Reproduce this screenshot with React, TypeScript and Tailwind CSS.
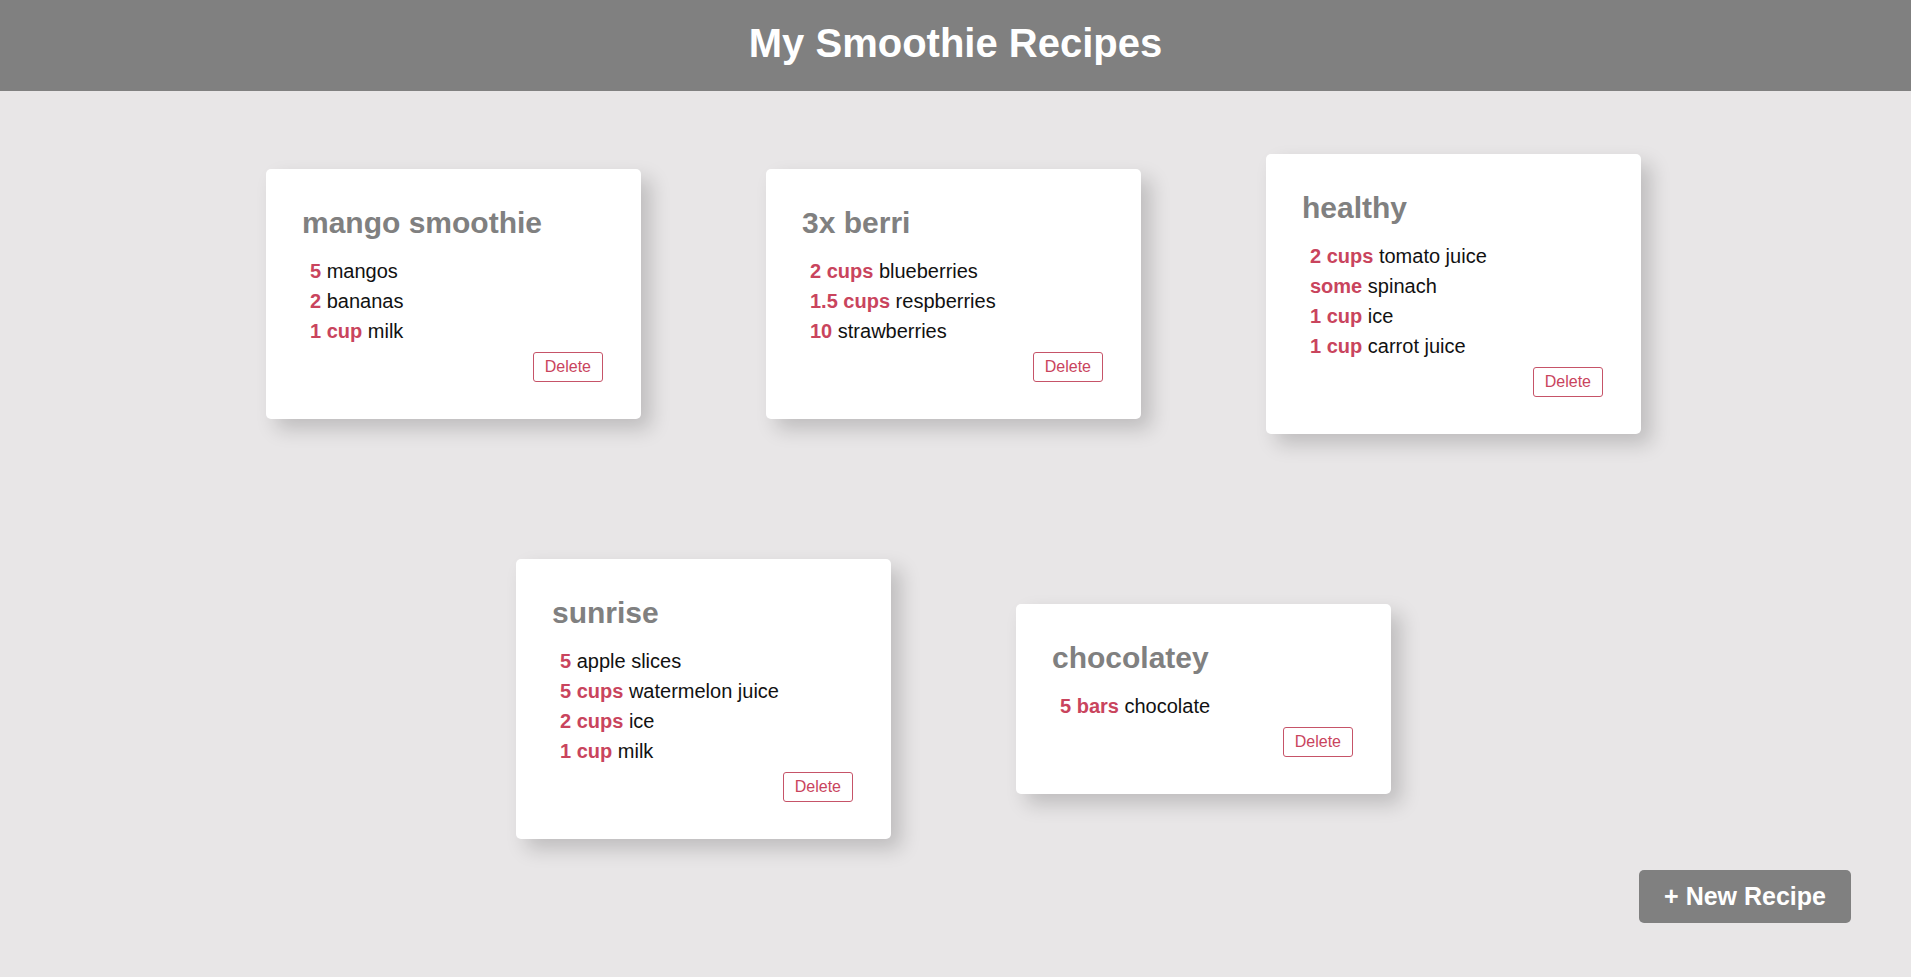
const recipes = [
  {
    name: "mango smoothie",
    ingredients: [
      { amount: "5", item: "mangos" },
      { amount: "2", item: "bananas" },
      { amount: "1 cup", item: "milk" },
    ],
  },
  {
    name: "3x berri",
    ingredients: [
      { amount: "2 cups", item: "blueberries" },
      { amount: "1.5 cups", item: "respberries" },
      { amount: "10", item: "strawberries" },
    ],
  },
  {
    name: "healthy",
    ingredients: [
      { amount: "2 cups", item: "tomato juice" },
      { amount: "some", item: "spinach" },
      { amount: "1 cup", item: "ice" },
      { amount: "1 cup", item: "carrot juice" },
    ],
  },
  {
    name: "sunrise",
    ingredients: [
      { amount: "5", item: "apple slices" },
      { amount: "5 cups", item: "watermelon juice" },
      { amount: "2 cups", item: "ice" },
      { amount: "1 cup", item: "milk" },
    ],
  },
  {
    name: "chocolatey",
    ingredients: [{ amount: "5 bars", item: "chocolate" }],
  },
]

function RecipeCard({ recipe }: { recipe: (typeof recipes)[number] }) {
  return (
    <div className="m-[62.5px] w-[375px] rounded-[5px] bg-white px-9 pt-[37px] pb-[37px] shadow-[10px_10px_20px_rgba(0,0,0,0.18)]">
      <h2 className="text-[30px] leading-[34px] font-bold text-[#808080]">{recipe.name}</h2>
      <ul className="mt-[16px] pl-2">
        {recipe.ingredients.map((ing, i) => (
          <li key={i} className="text-[20px] leading-[30px] text-[#111]">
            <span className="font-bold text-[#c9445d]">{ing.amount}</span> {ing.item}
          </li>
        ))}
      </ul>
      <div className="mt-[6px] flex justify-end">
        <button className="mr-[2px] rounded-[3px] border border-[#c65368] bg-white px-[11px] py-[5px] text-[16px] leading-[18px] text-[#c9445d]">
          Delete
        </button>
      </div>
    </div>
  )
}

export default function App() {
  return (
    <div className="min-h-screen bg-[#e8e6e7] font-['Liberation_Sans',Arial,sans-serif]">
      <header className="h-[91px] bg-[#808080] pt-[20px] text-center">
        <h1 className="text-[40px] leading-[46px] font-bold text-white">My Smoothie Recipes</h1>
      </header>

      <main className="flex flex-wrap items-center justify-center pr-1">
        {recipes.map((r) => (
          <RecipeCard key={r.name} recipe={r} />
        ))}
      </main>

      <button className="fixed right-[60px] bottom-[54px] rounded-[5px] bg-[#808080] px-[25px] py-3 text-[25px] leading-[29px] font-bold text-white">
        + New Recipe
      </button>
    </div>
  )
}
